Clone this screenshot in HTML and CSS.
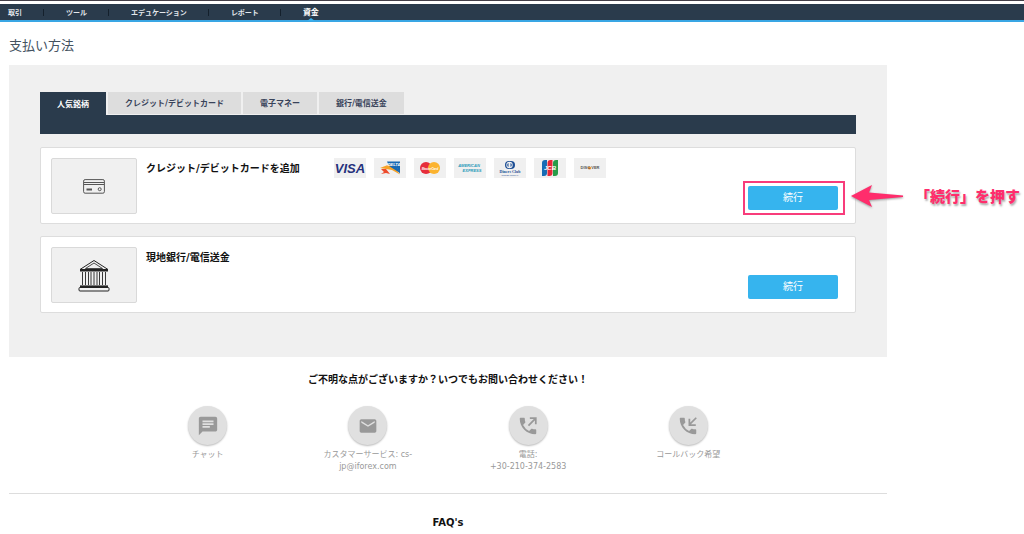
FILE: index.html
```html
<!DOCTYPE html>
<html lang="ja">
<head>
<meta charset="utf-8">
<meta name="viewport" content="width=device-width, initial-scale=1">
<title>支払い方法</title>
<link rel="stylesheet" href="styles.css">
</head>
<body>
<nav class="nav">
  <a href="#">取引</a>
  <a href="#">ツール</a>
  <a href="#">エデュケーション</a>
  <a href="#">レポート</a>
  <a href="#" class="current">資金</a>
</nav>
<main class="page">
  <h1 class="page-title">支払い方法</h1>
  <section class="panel">
    <div class="tabs">
      <button type="button" class="tab active">人気銘柄</button>
      <button type="button" class="tab">クレジット/デビットカード</button>
      <button type="button" class="tab">電子マネー</button>
      <button type="button" class="tab">銀行/電信送金</button>
    </div>
    <div class="tab-bar"></div>

    <article class="card">
      <div class="thumb">
        <svg width="22" height="15" viewBox="0 0 22 15" fill="none" stroke="#555"><rect x=".6" y=".6" width="20.8" height="13.6" rx="1.5"/><path d="M1 3.500h20M1 5.500h20"/><path d="M3.500 10.500h5.500" stroke-width="2"/><circle cx="16.700" cy="10.200" r="1.500"/></svg>
      </div>
      <h2 class="card-title">クレジット/デビットカードを追加</h2>
      <ul class="logos">
        <li><svg viewBox="0 0 32 20"><text x="16" y="15" text-anchor="middle" class="visa">VISA</text></svg></li>
        <li><svg viewBox="0 0 32 20"><path d="M13 3.500h13v12.500L22 8h-7z" fill="#1769b4"/><path d="M6 10l9-3.500 5 2 6 8-8-4.500z" fill="#f7a328"/><path d="M15 8l7-1 4 8z" fill="#1769b4"/><path d="M7 11h5l4 5-4-1-5 1 3-2z" fill="#ed4a2b"/><text x="20" y="7.500" text-anchor="middle" class="delta">DELTA</text></svg></li>
        <li><svg viewBox="0 0 32 20"><circle cx="12" cy="10" r="6" fill="#e62d3b"/><circle cx="20" cy="10" r="6" fill="#fbb32f"/><text x="16" y="11.500" text-anchor="middle" class="master">MasterCard</text></svg></li>
        <li><svg viewBox="0 0 32 20"><text x="15" y="9" text-anchor="middle" class="amex">AMERICAN</text><text x="18" y="14" text-anchor="middle" class="amex">EXPRESS</text></svg></li>
        <li><svg viewBox="0 0 32 20"><rect x="11" y="3" width="10" height="8" rx="4" fill="#1c4e95"/><circle cx="15.500" cy="7" r="3.200" fill="#f0f0f0"/><path d="M14.500 5a2.200 2.200 0 000 4zM16.500 5a2.200 2.200 0 010 4z" fill="#1c4e95"/><text x="16" y="14.500" text-anchor="middle" class="diners">Diners Club</text><text x="16" y="17.500" text-anchor="middle" class="diners small">INTERNATIONAL</text></svg></li>
        <li><svg viewBox="0 0 32 20"><path d="M8 5q0-3 3-3h2v13q0 3-3 3H8z" fill="#176cb5"/><path d="M13.500 5q0-3 3-3h2v13q0 3-3 3h-2z" fill="#e52738"/><path d="M19 5q0-3 3-3h2v13q0 3-3 3h-2z" fill="#279b48"/><text x="16" y="12" text-anchor="middle" class="jcb">JCB</text></svg></li>
        <li><svg viewBox="0 0 32 20"><circle cx="15.500" cy="10" r="1.600" fill="#f28a2c"/><text x="16" y="11.200" text-anchor="middle" class="discover">DISC VER</text></svg></li>
      </ul>
      <button type="button" class="continue">続行</button>
      <div class="highlight"></div>
      <div class="callout">
        <svg width="54" height="25" viewBox="0 0 54 25"><path d="M1 12L22 1l-3 7.500 34 3v1.500l-34 3L22 23z" fill="#ff2d6c"/></svg>
        <span>「続行」を押す</span>
      </div>
    </article>

    <article class="card">
      <div class="thumb">
        <svg width="32" height="33" viewBox="0 0 32 33" fill="none" stroke="#222"><path d="M2 10.500L16 1.500l14 9z"/><path d="M7.500 9.500L16 4l8.500 5.500z" stroke-width=".8"/><path d="M2 11.500h28" stroke-width="2"/><path d="M4.500 13v13M7.500 13v13M10.500 13v13M13 13v13M16 13v13M19 13v13M21.500 13v13M24.500 13v13M27.500 13v13" stroke-width=".9"/><path d="M2 27.500h28" stroke-width="2.200"/><rect x="1" y="28.500" width="30" height="3.500" rx="1"/></svg>
      </div>
      <h2 class="card-title">現地銀行/電信送金</h2>
      <button type="button" class="continue">続行</button>
    </article>
  </section>

  <section class="support">
    <h2 class="support-title">ご不明な点がございますか？いつでもお問い合わせください！</h2>
    <div class="contacts">
      <a href="#" class="contact">
        <span class="disc"><svg viewBox="0 0 24 24"><path d="M20 2H4c-1.100 0-2 .9-2 2v18l4-4h14c1.100 0 2-.9 2-2V4c0-1.100-.9-2-2-2zM6 9h12v2H6V9zm8 5H6v-2h8v2zm4-6H6V6h12v2z"/></svg></span>
        <span>チャット</span>
      </a>
      <a href="#" class="contact">
        <span class="disc"><svg class="mail" viewBox="0 0 24 24"><path d="M20 4H4c-1.100 0-2 .9-2 2v12c0 1.100.9 2 2 2h16c1.100 0 2-.9 2-2V6c0-1.100-.9-2-2-2zm0 4l-8 5-8-5V6l8 5 8-5v2z"/></svg></span>
        <span>カスタマーサービス: cs-<br>jp@iforex.com</span>
      </a>
      <a href="#" class="contact">
        <span class="disc"><svg viewBox="0 0 24 24"><path d="M20 15.500c-1.250 0-2.450-.2-3.570-.57-.35-.11-.74-.03-1.020.24l-2.200 2.200a15.100 15.100 0 01-6.590-6.590l2.200-2.210c.28-.26.36-.65.25-1A11.400 11.400 0 018.500 4c0-.55-.45-1-1-1H4c-.55 0-1 .45-1 1 0 9.390 7.610 17 17 17 .55 0 1-.45 1-1v-3.500c0-.55-.45-1-1-1z"/><path d="M12.500 11.500L20 4M14 3.500h6.500v6.500" fill="none" stroke="#999" stroke-width="1.900"/></svg></span>
        <span>電話:<br>+30-210-374-2583</span>
      </a>
      <a href="#" class="contact">
        <span class="disc"><svg viewBox="0 0 24 24"><path d="M20 15.500c-1.250 0-2.450-.2-3.570-.57-.35-.11-.74-.03-1.020.24l-2.200 2.200a15.100 15.100 0 01-6.590-6.590l2.200-2.210c.28-.26.36-.65.25-1A11.400 11.400 0 018.500 4c0-.55-.45-1-1-1H4c-.55 0-1 .45-1 1 0 9.390 7.610 17 17 17 .55 0 1-.45 1-1v-3.500c0-.55-.45-1-1-1z"/><path d="M21 3l-7.500 7.500M13.500 4v7h7" fill="none" stroke="#999" stroke-width="1.900"/></svg></span>
        <span>コールバック希望</span>
      </a>
    </div>
  </section>
  <h2 class="faq">FAQ's</h2>
</main>
</body>
</html>
```

FILE: styles.css
```css
* { box-sizing: border-box; }
body {
  margin: 0;
  background: #fff;
  color: #111;
  font: 10px/16px "DejaVu Sans", "Noto Sans CJK JP", sans-serif;
  border-top: 1px solid #444049;
}
h1, h2, ul { margin: 0; padding: 0; }
a { color: inherit; text-decoration: none; }
button { border: 0; margin: 0; padding: 0; font: inherit; cursor: pointer; }

.nav {
  display: flex;
  align-items: center;
  height: 18px;
  margin-top: 3px;
  padding: 1px 0 0 8px;
  background: #2a3b4c;
  border-bottom: 2px solid #39a6e4;
  color: #e4e8ec;
  font-size: 7px;
  font-weight: 700;
}
.nav a { position: relative; display: flex; align-items: center; white-space: nowrap; }
.nav a + a::before {
  content: "";
  width: 1px;
  height: 7px;
  margin: 0 22px 0 21px;
  background: #14202c;
}
.nav .current { color: #fff; font-size: 8px; }
.nav .current::after {
  content: "";
  position: absolute;
  right: 4px;
  bottom: 0;
  border: 4px solid transparent;
  border-top: 0;
  border-bottom: 3px solid #39b0ee;
}

.page { margin: 0 137px 0 9px; }
.page-title {
  padding: 14px 0 9px;
  color: #44525f;
  font-size: 13px;
  font-weight: 400;
  line-height: 20px;
}
.panel { padding: 27px 31px 44px; background: #f0f0f0; }

.tabs { display: flex; gap: 2px; }
.tab {
  height: 22px;
  margin-bottom: 1px;
  padding: 2px 17px 0;
  background: #ddd;
  color: #39435a;
  font-size: 8px;
  font-weight: 700;
  white-space: nowrap;
}
.tab.active { height: 23px; margin: 0; background: #2a3b4c; color: #fff; }
.tab-bar { height: 19px; background: #2a3b4c; }

.card {
  position: relative;
  display: flex;
  align-items: flex-start;
  margin-top: 13px;
  padding: 10px 17px 9px 10px;
  border: 1px solid #ddd;
  border-radius: 2px;
  background: #fff;
}
.card + .card { margin-top: 12px; }
.thumb {
  display: flex;
  flex: none;
  align-items: center;
  justify-content: center;
  width: 86px;
  height: 56px;
  border: 1px solid #d9d9d9;
  border-radius: 2px;
  background: #f0f0f0;
}
.card-title { width: 188px; margin-left: 9px; font-size: 10px; line-height: 22px; }
.logos { display: flex; gap: 8px; list-style: none; }
.logos li { height: 20px; background: #f0f0f0; }
.logos svg { display: block; width: 32px; height: 20px; }
.logos text { font-family: "Liberation Sans", sans-serif; font-weight: 700; font-style: italic; }
.logos .visa { font-size: 13px; fill: #26317c; }
.logos .delta { font-size: 4px; fill: #fff; }
.logos .master { font-size: 3px; fill: #fff; }
.logos .amex { font-size: 4px; fill: #2699b9; }
.logos .diners { font-family: "Liberation Serif", serif; font-style: normal; font-size: 4px; fill: #1c4e95; }
.logos .small { font-size: 2px; }
.logos .jcb { font-size: 6px; fill: #fff; }
.logos .discover { font-size: 4px; font-style: normal; fill: #555; }

.continue {
  width: 90px;
  height: 24px;
  margin: 28px 0 0 auto;
  border-radius: 2px;
  background: #36b4ee;
  color: #fff;
}
.highlight {
  position: absolute;
  top: 33px;
  right: 10px;
  width: 102px;
  height: 34px;
  border: 2px solid #f83c7b;
}
.callout {
  position: absolute;
  top: 36px;
  left: calc(100% - 5px);
  display: flex;
  align-items: center;
  gap: 11px;
  color: #ff2d6c;
  font-size: 15px;
  font-weight: 900;
  line-height: 24px;
  white-space: nowrap;
  text-shadow: 1px 2px 2px #aaa;
}
.callout svg { filter: drop-shadow(0 1px 1px #999); }

.support { padding: 15px 0 20px; border-bottom: 1px solid #ddd; }
.support-title { font-size: 10px; line-height: 16px; text-align: center; }
.contacts {
  display: grid;
  grid-template-columns: repeat(4, 1fr);
  width: 73%;
  margin: 18px auto 0;
}
.contact {
  display: flex;
  flex-direction: column;
  align-items: center;
  gap: 4px;
  color: #999;
  font-size: 8px;
  line-height: 12px;
  text-align: center;
}
.disc {
  display: flex;
  align-items: center;
  justify-content: center;
  width: 39px;
  height: 39px;
  border-radius: 50%;
  background: #e0e0e0;
  box-shadow: 0 1px 2px #bbb;
}
.disc svg { width: 22px; height: 22px; fill: #999; }
.disc .mail { width: 20px; height: 20px; }
.faq { padding: 21px 0 3px; font-size: 10px; line-height: 16px; text-align: center; }
```
